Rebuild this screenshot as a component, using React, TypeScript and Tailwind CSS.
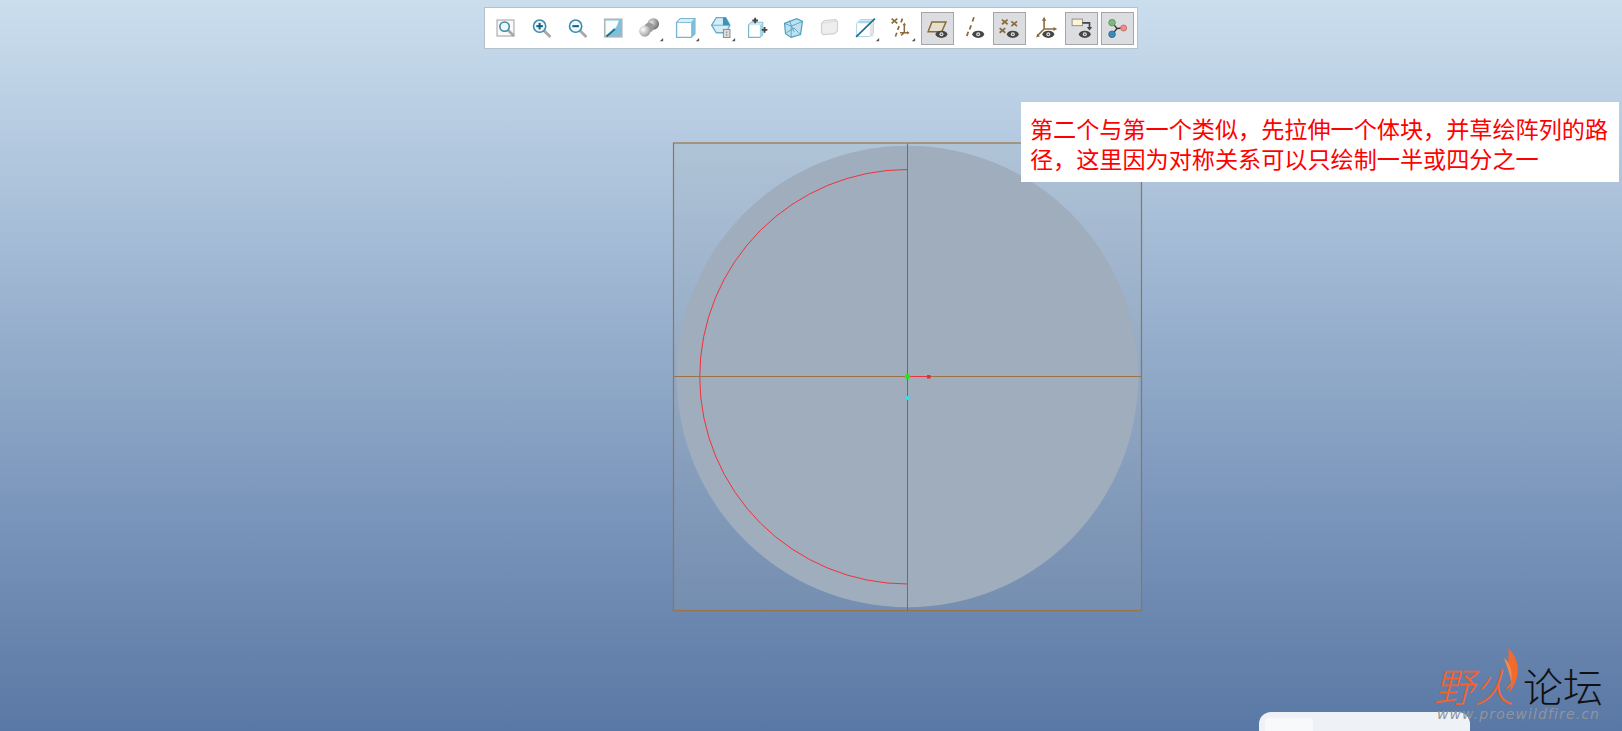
import type { ReactNode } from 'react';

const BROWN = '#8a6b3c';

function Eye({ x = 20.5, y = 22.7 }: { x?: number; y?: number }) {
    return (
        <g>
            <ellipse cx={x} cy={y} rx="6.3" ry="3.8" fill="#454545" />
            <circle cx={x} cy={y} r="2.1" fill="#e8e8e8" />
            <circle cx={x} cy={y} r="1" fill="#555" />
        </g>
    );
}

function Drop() {
    return <path d="M31 26.5v3.5h-3.5z" fill="#555" />;
}

function Cross({ x, y }: { x: number; y: number }) {
    return (
        <path
            d={`M${x - 3} ${y - 2.5}l6 5M${x + 3} ${y - 2.5}l-6 5`}
            stroke={BROWN}
            strokeWidth="1.8"
            fill="none"
        />
    );
}

function Lens({ x, y, r, sign }: { x: number; y: number; r: number; sign?: 'plus' | 'minus' }) {
    return (
        <g fill="none">
            <path d={`M${x + r * 0.7} ${y + r * 0.7}L${x + r + 5} ${y + r + 5}`} stroke="#a8a8a8" strokeWidth="3" />
            <circle cx={x} cy={y} r={r} stroke="#3d8aa8" strokeWidth="1.7" fill="#eef9fd" />
            {sign && <path d={`M${x - 3.5} ${y}h7`} stroke="#17607f" strokeWidth="2.2" />}
            {sign === 'plus' && <path d={`M${x} ${y - 3.5}v7`} stroke="#17607f" strokeWidth="2.2" />}
        </g>
    );
}

const icons: { on?: boolean; draw: ReactNode }[] = [
    {
        draw: (
            <>
                <rect x="7.5" y="7.5" width="18" height="17" fill="#fafafa" stroke="#b5b5b5" strokeWidth="1.4" />
                <Lens x={15.5} y={14.5} r={5} />
            </>
        ),
    },
    { draw: <Lens x={14.5} y={14} r={6.5} sign="plus" /> },
    { draw: <Lens x={14.5} y={14} r={6.5} sign="minus" /> },
    {
        draw: (
            <>
                <rect x="7" y="6.5" width="18.5" height="19" fill="#7fc0da" stroke="#b5b5b5" strokeWidth="1.4" />
                <path d="M8 8h14c-1 7-6 12-14 16z" fill="#f6fbfd" />
                <path d="M9 25l9-8" stroke="#1f6f92" strokeWidth="2" />
            </>
        ),
    },
    {
        draw: (
            <>
                <defs>
                    <radialGradient id="ball" cx="0.35" cy="0.35" r="0.8">
                        <stop offset="0" stopColor="#ffffff" />
                        <stop offset="1" stopColor="#8a8a8a" />
                    </radialGradient>
                    <radialGradient id="ball2" cx="0.35" cy="0.35" r="0.8">
                        <stop offset="0" stopColor="#e0e0e0" />
                        <stop offset="1" stopColor="#5a5a5a" />
                    </radialGradient>
                </defs>
                <circle cx="20.5" cy="11.7" r="6.2" fill="url(#ball2)" />
                <circle cx="16" cy="15.5" r="5" fill="#9a9a9a" />
                <circle cx="11.5" cy="19.3" r="6" fill="url(#ball)" />
                <Drop />
            </>
        ),
    },
    {
        draw: (
            <>
                <path d="M7 10l4-4h15.5v16l-4 4H7z" fill="#ffffff" stroke="#76b6d0" strokeWidth="1.4" />
                <path d="M22.5 10l4-4v16l-4 4z" fill="#7cbdd8" />
                <path d="M7 10h15.5l4-4H11z" fill="#dff1f8" stroke="#76b6d0" />
                <Drop />
            </>
        ),
    },
    {
        draw: (
            <>
                <path d="M6 13l5-8h10l4.5 8-4.5 8H11z" fill="#d4eef8" stroke="#68adc9" strokeWidth="1.4" />
                <path d="M6 13h19.5" stroke="#68adc9" />
                <path d="M18 5h3l4.5 8H18z" fill="#3d92b8" />
                <rect x="18.5" y="17.5" width="7" height="8.5" fill="#dcdcdc" stroke="#888" />
                <path d="M22 20v.8M22 23v.8" stroke="#333" strokeWidth="1.2" />
                <Drop />
            </>
        ),
    },
    {
        draw: (
            <>
                <path d="M7 13l3-3h12v13l-3 3H7z" fill="#ffffff" stroke="#76b6d0" strokeWidth="1.3" />
                <path d="M19 13l3-3v13l-3 3z" fill="#a7d6e8" />
                <path d="M7 13h12l3-3H10z" fill="#cfe9f3" />
                <path d="M14 5v6M11 8h6M21 18h6M24 15v6" stroke="#444" strokeWidth="2" />
            </>
        ),
    },
    {
        draw: (
            <g fill="none" stroke="#4f9fc0" strokeWidth="1.3">
                <path d="M7 11l13-5 6 3-2 14-10 3-6-4z" fill="#bfe1ee" />
                <path d="M7 11l7 3 12-5M14 14v12M9 21l8-5 7 7M12 8l5 12" strokeWidth="0.9" />
            </g>
        ),
    },
    {
        draw: (
            <g opacity="0.85">
                <path d="M8 11l3-3 12-1 2 2v10l-3 3-12 1-2-2z" fill="#ececec" stroke="#c9c9c9" strokeWidth="1.3" />
                <path d="M8 11l15-2" stroke="#d4d4d4" />
            </g>
        ),
    },
    {
        draw: (
            <>
                <path d="M7 25V11l4-4h14v14l-4 4z" fill="#ffffff" stroke="#a9d3e3" />
                <path d="M8 11l3-3h13l-4 3z" fill="#a5d8ec" />
                <path d="M21 11h4v14h-4z" fill="#d9d9d9" opacity="0.7" />
                <path d="M6.5 25.5L26.5 6" stroke="#1f6f92" strokeWidth="1.8" />
                <Drop />
            </>
        ),
    },
    {
        draw: (
            <>
                <Cross x={9} y={8.5} />
                <path d="M17.5 6l-1.5 4M14 14l-1.5 4M11.5 21l-1.5 4" stroke={BROWN} strokeWidth="1.8" fill="none" />
                <path d="M19.5 12v9M15 21h9M16 24l3.5-3" stroke={BROWN} strokeWidth="1.6" fill="none" />
                <path d="M19.5 10l-1.8 3h3.6zM25 21l-2.5-1.8v3.6z" fill={BROWN} />
                <Drop />
            </>
        ),
    },
    {
        on: true,
        draw: (
            <>
                <path d="M10.5 9.5h15L21 20H6.5z" fill="#e5dfcd" stroke={BROWN} strokeWidth="1.6" />
                <Eye x={20.7} />
            </>
        ),
    },
    {
        draw: (
            <>
                <path d="M17 4.5l-1.6 4.5M14 13l-1.6 4.5M11 20l-1.6 4.5" stroke={BROWN} strokeWidth="1.9" fill="none" />
                <Eye x={21.5} />
            </>
        ),
    },
    {
        on: true,
        draw: (
            <>
                <Cross x={11.5} y={9.5} />
                <Cross x={21.5} y={11.5} />
                <Cross x={9} y={18.5} />
                <Eye x={20} />
            </>
        ),
    },
    {
        draw: (
            <>
                <path d="M15 7v10H26M15 17l-7 7" stroke={BROWN} strokeWidth="1.7" fill="none" />
                <path d="M15 4l-2.3 4.2h4.6zM29 17l-4-2.2v4.4zM6.5 26l4.2-1.2-2.8-2.8z" fill={BROWN} />
                <Eye x={19.5} />
            </>
        ),
    },
    {
        on: true,
        draw: (
            <>
                <rect x="6.5" y="6.5" width="11" height="7" fill="#fbf5d2" stroke="#8c8c8c" />
                <path d="M17.5 10.5H25v5" stroke="#444" strokeWidth="1.7" fill="none" />
                <path d="M25 18.5l-2.8-3.5h5.6z" fill="#444" />
                <Eye x={20} />
            </>
        ),
    },
    {
        on: true,
        draw: (
            <>
                <path d="M11 10.5l5 6 7-.5M16 16.5l-5 6" stroke="#333" strokeWidth="1.4" fill="none" />
                <circle cx="10.7" cy="10.3" r="3.5" fill="#7eb87e" stroke="#5e975e" />
                <circle cx="23" cy="16" r="3.2" fill="#ef8d8d" stroke="#c96a6a" />
                <circle cx="10.7" cy="22.7" r="3.5" fill="#3f89b5" stroke="#2f6f96" />
            </>
        ),
    },
];

function Toolbar() {
    return (
        <div className="ml-[484px] mt-[7px] flex h-[42px] w-[654px] items-center gap-[3.06px] border border-[#b5c2cc] bg-white pl-[3.5px]">
            {icons.map((icon, i) => (
                <div
                    key={i}
                    className={
                        icon.on
                            ? 'h-[33px] w-[33px] shrink-0 border border-[#a6a6a6] bg-[#dcdde0]'
                            : 'h-[33px] w-[33px] shrink-0 border border-transparent'
                    }
                >
                    <svg viewBox="0 0 33 33" className="h-full w-full">
                        {icon.draw}
                    </svg>
                </div>
            ))}
        </div>
    );
}

// model view, coordinates are page pixels
function Drawing() {
    return (
        <svg viewBox="670 140 475 475" className="ml-[670px] mt-[91px] block h-[475px] w-[475px]">
            <rect x="673.5" y="143" width="468" height="467.5" fill="#a3abb4" fillOpacity="0.18" />
            <circle cx="907.5" cy="376.5" r="230.8" fill="#9fadbd" />
            <path d="M907.5 169.5a207.5 207 0 0 0 0 414.5" fill="none" stroke="#f0323c" strokeWidth="1" />
            <rect x="673.5" y="143" width="468" height="467.5" fill="none" stroke="#9a7448" strokeWidth="1.2" />
            <path d="M673.5 376.5H1141.5" stroke="#9a7448" strokeWidth="1.1" />
            <path d="M907.5 143.5V169M907.5 584V610.5" stroke="#7d6a50" strokeWidth="1" />
            <path d="M907.5 169V584" stroke="#f0323c" strokeWidth="1" />
            <path d="M907.5 376.5H929" stroke="#f0323c" strokeWidth="1" />
            <circle cx="907.5" cy="376.5" r="2.6" fill="#22e622" />
            <rect x="927" y="375" width="3.5" height="3.5" fill="#f02828" />
            <circle cx="907.5" cy="398" r="2" fill="#26e8f0" />
        </svg>
    );
}

function Logo() {
    return (
        <div className="absolute left-[1434px] top-[640px] w-[172px] font-['Noto_Sans_CJK_SC',sans-serif]">
            <svg viewBox="780 45 60 140" className="absolute left-[68px] top-[6px] h-[50px] w-[21px]">
                <path d="M797 50c26 22 46 70 3 128 10-30 8-55-3-72 0-20 4-36 0-56z" fill="#f26a2e" />
                <path d="M785 78c14 10 26 30 22 72-3-22-12-48-22-72z" fill="#f58a4a" />
            </svg>
            <div className="mt-[22px] flex h-[46px] items-center text-[40px] font-light leading-none">
                <span className="italic text-[#f4622c]">野</span>
                <span className="italic text-[#f4622c]">火</span>
                <span className="ml-[9px] text-[#111]">论坛</span>
            </div>
            <div className="-mt-[1px] ml-[3px] font-['DejaVu_Sans',sans-serif] text-[14px] italic leading-none tracking-[1.1px] text-[#8f959e]">
                www.proewildfire.cn
            </div>
        </div>
    );
}

export default function App() {
    return (
        <div className="relative h-screen w-full overflow-hidden bg-gradient-to-b from-[#cbdeee] to-[#5a78a5]">
            <Toolbar />
            <Drawing />

            {/* note over the model */}
            <div className="absolute left-[1021px] top-[102px] h-[80px] w-[598px] bg-white px-[9px] pt-[12px] font-['Noto_Sans_CJK_SC',sans-serif] text-[23.13px] leading-[29.5px] text-[#ff0000]">
                第二个与第一个类似，先拉伸一个体块，并草绘阵列的路径，这里因为对称关系可以只绘制一半或四分之一
            </div>

            {/* bottom widget cut off by the page edge */}
            <div className="absolute left-[1259px] top-[712px] h-[40px] w-[211px] rounded-t-[12px] bg-[#eef1f6] pl-[6px] pt-[6px]">
                <div className="h-[30px] w-[48px] rounded-t-[4px] bg-[#f8f9fb]" />
            </div>

            <Logo />
        </div>
    );
}
